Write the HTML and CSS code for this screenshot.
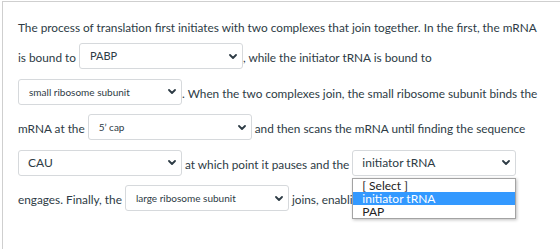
FILE: index.html
```html
<!DOCTYPE html>
<html lang="en">
<head>
<meta charset="utf-8">
<title>Translation initiation</title>
<link rel="stylesheet" href="styles.css">
</head>
<body>
<div class="frame">
  <p class="question">The process of translation first initiates with two complexes that join together. In the first, the mRNA is bound to <span class="sel w-md"><span class="sel-text">PABP</span><svg class="chev" viewBox="0 0 8 5" width="8" height="5"><path d="M1 1l3 3 3-3" fill="none" stroke="#2d3b45" stroke-width="1.8" stroke-linecap="round" stroke-linejoin="round"/></svg></span>, while the initiator tRNA is bound to <span class="sel w-sm"><span class="sel-text">small ribosome subunit</span><svg class="chev" viewBox="0 0 8 5" width="8" height="5"><path d="M1 1l3 3 3-3" fill="none" stroke="#2d3b45" stroke-width="1.8" stroke-linecap="round" stroke-linejoin="round"/></svg></span>. When the two complexes join, the small ribosome subunit binds the mRNA at the <span class="sel w-sm"><span class="sel-text">5’ cap</span><svg class="chev" viewBox="0 0 8 5" width="8" height="5"><path d="M1 1l3 3 3-3" fill="none" stroke="#2d3b45" stroke-width="1.8" stroke-linecap="round" stroke-linejoin="round"/></svg></span> and then scans the mRNA until finding the sequence <span class="sel w-lg"><span class="sel-text">CAU</span><svg class="chev" viewBox="0 0 8 5" width="8" height="5"><path d="M1 1l3 3 3-3" fill="none" stroke="#2d3b45" stroke-width="1.8" stroke-linecap="round" stroke-linejoin="round"/></svg></span> at which point it pauses and the <span class="sel w-lg open"><span class="sel-text">initiator tRNA</span><svg class="chev" viewBox="0 0 8 5" width="8" height="5"><path d="M1 1l3 3 3-3" fill="none" stroke="#2d3b45" stroke-width="1.8" stroke-linecap="round" stroke-linejoin="round"/></svg><span class="menu"><span class="opt">[ Select ]</span><span class="opt active">initiator tRNA</span><span class="opt">PAP</span></span></span> engages. Finally, the <span class="sel w-sm"><span class="sel-text">large ribosome subunit</span><svg class="chev" viewBox="0 0 8 5" width="8" height="5"><path d="M1 1l3 3 3-3" fill="none" stroke="#2d3b45" stroke-width="1.8" stroke-linecap="round" stroke-linejoin="round"/></svg></span> joins, enabling elongation.</p>
</div>
</body>
</html>
```
FILE: styles.css
```css
html, body {
  margin: 0;
  padding: 0;
  background: #ffffff;
  overflow: hidden;
}

.frame {
  margin: 1px 0 0 2px;
  width: 528px;
  height: 231px;
  padding: 16px 15px 0 15px;
  border-top: 1px solid #cfcfcf;
  border-left: 1px solid #cfcfcf;
  font-family: Lato, "Open Sans", sans-serif;
  color: #2d3b45;
}

.question {
  margin: 0;
  font-size: 11.8px;
  line-height: 20px;
}

.sel {
  position: relative;
  display: inline-flex;
  align-items: center;
  justify-content: space-between;
  box-sizing: border-box;
  width: 164px;
  height: 26px;
  margin: 5px 0 4.5px;
  padding: 0 5px 0 10px;
  border: 1px solid #d6d9dc;
  border-radius: 3px;
  background: #ffffff;
  vertical-align: 2px;
  line-height: 14px;
}

.sel-text {
  white-space: nowrap;
}

.w-sm .sel-text { font-size: 10px; }
.w-md .sel-text { font-size: 11px; }
.w-lg .sel-text { font-size: 12px; }
.w-lg { padding-left: 9px; }

.chev {
  flex: none;
  display: block;
}

.menu {
  position: absolute;
  left: -1px;
  top: 27px;
  width: 164px;
  box-sizing: border-box;
  display: flex;
  flex-direction: column;
  background: #ffffff;
  border: 1px solid #a3a3a3;
  box-shadow: 1px 1px 3px rgba(0, 0, 0, 0.25);
  z-index: 2;
}

.opt {
  font-size: 12px;
  line-height: 13px;
  padding: 0 9px;
  color: #222222;
  white-space: nowrap;
}

.opt.active {
  background: #3399ff;
  color: #ffffff;
}
```
